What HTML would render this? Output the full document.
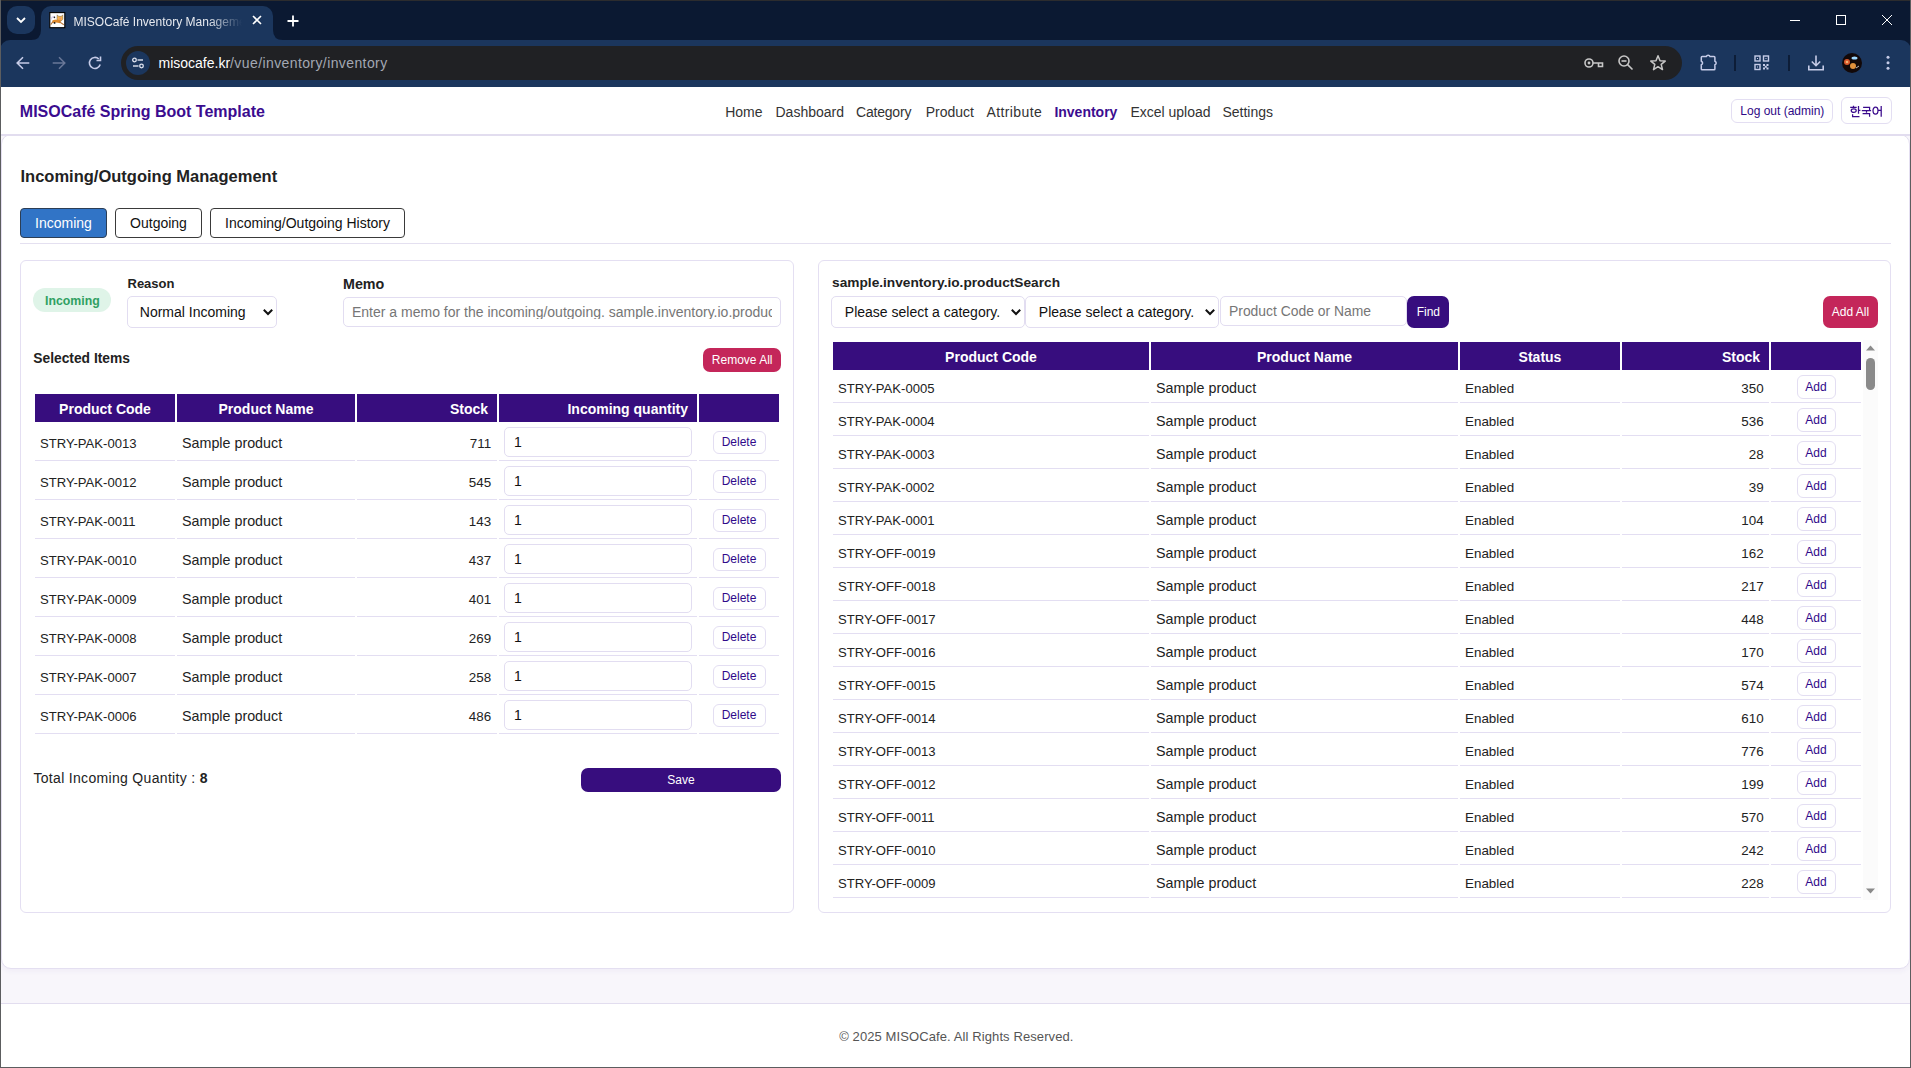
<!DOCTYPE html>
<html><head><meta charset="utf-8">
<style>
*{box-sizing:border-box;margin:0;padding:0}
html,body{width:1911px;height:1068px;overflow:hidden;background:#fff;font-family:"Liberation Sans",sans-serif;position:relative}
.a{position:absolute}
.t{position:absolute;white-space:nowrap;line-height:1}
/* chrome */
#strip{left:0;top:0;width:1911px;height:50px;background:#0b1932}
#tbar{left:0;top:40px;width:1911px;height:47px;background:#1b365d;border-radius:10px 10px 0 0}
#omni{left:121px;top:46px;width:1561px;height:34px;background:#202124;border-radius:17px}
.ic{position:absolute}
/* page */
#nav{left:0;top:87px;width:1911px;height:47px;background:#fff}
#navline{left:0;top:134px;width:1911px;height:2px;background:#e2ddef}
#outer{left:0;top:136px;width:1911px;height:867px;background:#f8f6fb}
#card{left:1px;top:134px;width:1909px;height:835px;background:#fff;border:1px solid #e4dff1;border-radius:10px;box-shadow:0 3px 5px rgba(70,40,140,0.035)}
#foot{left:0;top:1003px;width:1911px;height:65px;background:#fff;border-top:1px solid #e2ddef}
.nv{font-size:14px;color:#333;top:105px}
.btnw{position:absolute;border:1px solid #e3def2;border-radius:6px;background:#fff}
.panel{position:absolute;border:1px solid #e4dff2;border-radius:6px;background:#fff}
.tab{position:absolute;top:208px;height:30px;border:1px solid #3a3a3a;border-radius:4px;background:#fff;font-size:14px;color:#111;text-align:center;line-height:28px}
.inp{position:absolute;border:1px solid #e2ddf1;border-radius:5px;background:#fff}
table.tb{position:absolute;border-collapse:separate;border-spacing:2px;table-layout:fixed}
.tb th{background:#370d7e;color:#fff;font-weight:bold;font-size:14px;height:28px;padding:2px 9px 0;white-space:nowrap}
.tb td{border-bottom:1px solid #e3def2;font-size:13.1px;color:#222;white-space:nowrap;padding:2px 5px 0}
.tbL td{height:37px}
.tbR td{height:31px}
.sb{display:inline-block;border:1px solid #e3def2;border-radius:6px;background:#fff;color:#30098a;font-size:12px;text-align:center}
.tb td.cd{font-size:13.1px}
.tb td.nm{font-size:14.3px}
.tb td.nu{font-size:13.4px}
.tb td.en{font-size:13.4px}
.qi{height:30px;border:1px solid #e2ddf1;border-radius:5px;font-size:14px;color:#111;padding-left:9px;line-height:28px}
.db{width:53px;height:23px;line-height:21px}
.ab{width:39px;height:24px;line-height:22px}
</style></head><body>

<!-- CHROME -->
<div class="a" id="strip"></div>
<div class="a" style="left:0;top:0;width:1911px;height:1px;background:#2c2c2e"></div>
<div class="a" id="tbar"></div>
<!-- tab search -->
<div class="a" style="left:7px;top:6px;width:28px;height:28px;background:#1b365d;border-radius:10px"></div>
<svg class="ic" style="left:15px;top:15px" width="12" height="10" viewBox="0 0 12 10"><path d="M2 3 L6 7 L10 3" fill="none" stroke="#fff" stroke-width="1.8"/></svg>
<!-- active tab -->
<div class="a" style="left:41px;top:6px;width:232px;height:36px;background:#1b365d;border-radius:10px 10px 0 0"></div>
<svg class="ic" style="left:31px;top:30px" width="10" height="10"><path d="M0 10 Q10 10 10 0 L10 10 Z" fill="#1b365d"/></svg>
<svg class="ic" style="left:273px;top:30px" width="10" height="10"><path d="M10 10 Q0 10 0 0 L0 10 Z" fill="#1b365d"/></svg>
<svg class="ic" style="left:46px;top:9px" width="22" height="22" viewBox="0 0 22 22"><rect x="3.8" y="3.6" width="15" height="15.1" fill="#fff" stroke="#000" stroke-width="1.1"/><path d="M5.5 10.5 Q4.8 7.3 8.8 7.6" fill="none" stroke="#d9d3ef" stroke-width="1.3"/><circle cx="8.4" cy="8.4" r="0.8" fill="#222"/><path d="M11.2 5.8 L12.6 7.3 L15.4 7.3 L16.8 5.8 L16.9 10.2 L15.2 12 L12.2 11.8 L11 9.6 Z" fill="#f6b64c" stroke="#6a5a50" stroke-width="0.5"/><circle cx="14.1" cy="9.7" r="0.9" fill="#e98a80"/><path d="M6.3 11.6 Q10.5 9.4 15 11.4 L14.2 14.2 Q9.5 12.9 6.6 14 Z" fill="#e08a2a"/><path d="M7 12.6 L4.6 15.6 M13.2 12.6 L17.8 15.8" stroke="#b8773a" stroke-width="1.1"/><circle cx="8.6" cy="13.9" r="0.9" fill="#111"/></svg>
<div class="t" style="left:73.5px;top:15.5px;font-size:12px;color:#e6e9ef;width:168px;height:16px;overflow:hidden;-webkit-mask-image:linear-gradient(90deg,#000 80%,transparent 100%)">MISOCafé Inventory Management System</div>
<svg class="ic" style="left:251px;top:14px" width="12" height="12" viewBox="0 0 12 12"><path d="M2 2 L10 10 M10 2 L2 10" stroke="#fff" stroke-width="1.6"/></svg>
<svg class="ic" style="left:286px;top:13.5px" width="14" height="14" viewBox="0 0 14 14"><path d="M7 1.5 V12.5 M1.5 7 H12.5" stroke="#fff" stroke-width="1.8"/></svg>
<!-- window controls -->
<div class="a" style="left:1790px;top:20px;width:10px;height:1px;background:#fff"></div>
<div class="a" style="left:1836px;top:15px;width:10px;height:10px;border:1px solid #fff"></div>
<svg class="ic" style="left:1881px;top:14px" width="12" height="12" viewBox="0 0 12 12"><path d="M1 1 L11 11 M11 1 L1 11" stroke="#fff" stroke-width="1"/></svg>
<!-- nav buttons -->
<svg class="ic" style="left:14px;top:55px" width="18" height="16" viewBox="0 0 18 16"><path d="M15.3 8 H3.4 M9 2.2 L3.2 8 L9 13.8" fill="none" stroke="#c6cce8" stroke-width="1.6"/></svg>
<svg class="ic" style="left:51px;top:55px" width="18" height="16" viewBox="0 0 18 16"><path d="M1.7 8 H13.6 M8 2.2 L13.8 8 L8 13.8" fill="none" stroke="#6a7898" stroke-width="1.5"/></svg>
<svg class="ic" style="left:87px;top:55px" width="16" height="16" viewBox="0 0 16 16"><path d="M13.2 9.5 A5.5 5.5 0 1 1 11.8 4" fill="none" stroke="#c6cce8" stroke-width="1.6"/><path d="M13.5 1.5 V5.5 H9.5" fill="none" stroke="#c6cce8" stroke-width="1.6"/></svg>
<div class="a" id="omni"></div>
<div class="a" style="left:126px;top:51px;width:24px;height:24px;border-radius:12px;background:#1b365d"></div>
<svg class="ic" style="left:131px;top:56px" width="14" height="14" viewBox="0 0 14 14"><circle cx="3.5" cy="4" r="1.8" fill="none" stroke="#e0e4f0" stroke-width="1.3"/><path d="M6.5 4 H12" stroke="#e0e4f0" stroke-width="1.4"/><circle cx="10.5" cy="10" r="1.8" fill="none" stroke="#e0e4f0" stroke-width="1.3"/><path d="M2 10 H7.5" stroke="#e0e4f0" stroke-width="1.4"/></svg>
<div class="t" style="left:158.5px;top:56.2px;font-size:14px;color:#fff">misocafe.kr<span style="color:#a3a8b3;letter-spacing:0.4px">/vue/inventory/inventory</span></div>
<!-- omnibox right icons -->
<svg class="ic" style="left:1584px;top:56px" width="20" height="14" viewBox="0 0 20 14"><circle cx="5" cy="7" r="4" fill="none" stroke="#c7c7c7" stroke-width="1.6"/><circle cx="5" cy="7" r="1.4" fill="#c7c7c7"/><path d="M9 7 H18.5 V10.5 H14.5 V7" fill="none" stroke="#c7c7c7" stroke-width="1.6"/></svg>
<svg class="ic" style="left:1617px;top:54px" width="18" height="18" viewBox="0 0 18 18"><circle cx="7" cy="7" r="5" fill="none" stroke="#c7c7c7" stroke-width="1.6"/><path d="M4.5 7 H9.5" stroke="#c7c7c7" stroke-width="1.6"/><path d="M10.6 10.6 L15.5 15.5" stroke="#c7c7c7" stroke-width="1.6"/></svg>
<svg class="ic" style="left:1649px;top:54px" width="18" height="18" viewBox="0 0 18 18"><path d="M9 1.8 L11 6.8 L16.2 7.1 L12.2 10.4 L13.5 15.6 L9 12.7 L4.5 15.6 L5.8 10.4 L1.8 7.1 L7 6.8 Z" fill="none" stroke="#c7c7c7" stroke-width="1.5" stroke-linejoin="round"/></svg>
<!-- toolbar right icons -->
<svg class="ic" style="left:1700px;top:53px" width="18" height="18" viewBox="0 0 18 18"><path d="M2.2 3.6 H6.3 A1.9 1.9 0 0 1 10 3.6 H14 Q14.9 3.6 14.9 4.5 V8.2 A1.9 1.9 0 0 1 14.9 11.8 V15.9 Q14.9 16.8 14 16.8 H2.2 Q1.3 16.8 1.3 15.9 V11.8 A1.9 1.9 0 0 0 1.3 8.2 V4.5 Q1.3 3.6 2.2 3.6 Z" fill="none" stroke="#c6cce8" stroke-width="1.5" stroke-linejoin="round"/></svg>
<div class="a" style="left:1734px;top:55px;width:2px;height:16px;background:#0d1d37"></div>
<svg class="ic" style="left:1754px;top:55px" width="16" height="16" viewBox="0 0 16 16"><rect x="1" y="1" width="5" height="5" fill="none" stroke="#c6cce8" stroke-width="1.4"/><rect x="9.5" y="1" width="5" height="5" fill="none" stroke="#c6cce8" stroke-width="1.4"/><rect x="1" y="9.5" width="5" height="5" fill="none" stroke="#c6cce8" stroke-width="1.4"/><rect x="3" y="3" width="1" height="1" fill="#c6cce8"/><rect x="11.5" y="3" width="1" height="1" fill="#c6cce8"/><rect x="3" y="11.5" width="1" height="1" fill="#c6cce8"/><path d="M9 9 h2 v2 h-2z M12.5 9 h2 v2 h-2z M10.8 10.8 h2 v2 h-2z M9 12.5 h2 v2 h-2z M12.5 12.5 h2 v2 h-2z" fill="#c6cce8"/></svg>
<div class="a" style="left:1788px;top:55px;width:2px;height:16px;background:#0d1d37"></div>
<svg class="ic" style="left:1807px;top:54px" width="18" height="18" viewBox="0 0 18 18"><path d="M9 1.5 V11.5 M4.8 7.5 L9 11.7 L13.2 7.5" fill="none" stroke="#c6cce8" stroke-width="1.6"/><path d="M1.8 11.5 V15.8 H16.2 V11.5" fill="none" stroke="#c6cce8" stroke-width="1.6"/></svg>
<svg class="ic" style="left:1842px;top:53px" width="20" height="20" viewBox="0 0 20 20"><circle cx="10" cy="10" r="10" fill="#120808"/><circle cx="5" cy="9" r="3" fill="#d8562a"/><circle cx="5" cy="9" r="1.3" fill="#f0b070"/><ellipse cx="12.5" cy="5" rx="3" ry="1.6" fill="#9fd8ff"/><circle cx="11" cy="13" r="3" fill="#e0913c"/><path d="M14 15 L17 13" stroke="#bbb" stroke-width="1"/></svg>
<svg class="ic" style="left:1885px;top:55px" width="6" height="16" viewBox="0 0 6 16"><circle cx="3" cy="2.3" r="1.5" fill="#c6cce8"/><circle cx="3" cy="7.8" r="1.5" fill="#c6cce8"/><circle cx="3" cy="13.3" r="1.5" fill="#c6cce8"/></svg>
<!-- PAGE -->
<div class="a" id="nav"></div>
<div class="a" id="outer"></div>
<div class="a" id="card"></div>
<div class="a" id="navline"></div>
<div class="a" id="foot"></div>
<div class="t" style="left:19.8px;top:103.8px;font-size:16px;font-weight:bold;color:#3b0c8f">MISOCafé Spring Boot Template</div>
<div class="t nv" style="left:725.2px">Home</div>
<div class="t nv" style="left:775.5px">Dashboard</div>
<div class="t nv" style="left:856px;letter-spacing:-0.2px">Category</div>
<div class="t nv" style="left:925.7px">Product</div>
<div class="t nv" style="left:986.4px;letter-spacing:0.4px">Attribute</div>
<div class="t nv" style="left:1054.4px;font-weight:bold;color:#3b0c8f">Inventory</div>
<div class="t nv" style="left:1130.4px">Excel upload</div>
<div class="t nv" style="left:1222.4px">Settings</div>
<div class="btnw" style="left:1731px;top:99px;width:102px;height:24px"></div>
<div class="t" style="left:1740.3px;top:104.7px;font-size:12px;color:#2f0a86">Log out (admin)</div>
<div class="btnw" style="left:1841px;top:97px;width:51px;height:27px"></div>
<svg class="ic" style="left:1846px;top:100px" width="40" height="22" viewBox="0 0 40 22"><g fill="none" stroke="#3a0a8c" stroke-width="1.25"><path d="M7.5 5.8 V7.4 M4.2 7.4 H10.7"/><ellipse cx="7.7" cy="10.6" rx="2.5" ry="1.8"/><path d="M12.5 6 V13.8 M12.5 10.4 H14.4"/><path d="M6.6 14.3 V16.6 H13.5"/><path d="M17.1 7.3 H23.6 V10.4 M15.8 10.6 H25.1 M20.5 10.6 V12.8 M16.6 13.7 H23.6 V16.8"/><ellipse cx="29.5" cy="10.6" rx="2.5" ry="3.6"/><path d="M32 10.3 H35.2 M35.2 6 V16.8"/></g></svg>
<div class="t" style="left:20.5px;top:168.3px;font-size:16.5px;font-weight:bold;color:#222">Incoming/Outgoing Management</div>
<div class="tab" style="left:20px;width:87px;background:#3174c6;color:#fff;border-color:#2c3e55">Incoming</div>
<div class="tab" style="left:115px;width:87px">Outgoing</div>
<div class="tab" style="left:210px;width:195px">Incoming/Outgoing History</div>
<div class="a" style="left:20px;top:243px;width:1871px;height:1px;background:#e4e0f0"></div>
<div class="panel" style="left:20px;top:260px;width:774px;height:653px"></div>
<div class="panel" style="left:818px;top:260px;width:1073px;height:653px"></div>
<!-- LEFT PANEL -->
<div class="a" style="left:33px;top:288px;width:78px;height:24px;border-radius:12px;background:#dff4e8"></div>
<div class="t" style="left:45px;top:294.9px;font-size:12.3px;font-weight:bold;color:#30a062">Incoming</div>
<div class="t" style="left:127.5px;top:277px;font-size:13px;font-weight:bold;color:#222">Reason</div>
<div class="inp" style="left:127px;top:296px;width:150px;height:32px"></div>
<div class="t" style="left:139.8px;top:304.9px;font-size:14px;color:#111">Normal Incoming</div>
<div class="a" style="left:262px;top:308px;line-height:0"><svg width="12" height="8" viewBox="0 0 12 8"><path d="M1.8 1.8 L6 6 L10.2 1.8" fill="none" stroke="#111" stroke-width="2"/></svg></div>
<div class="t" style="left:343px;top:277px;font-size:14.3px;font-weight:bold;color:#222">Memo</div>
<div class="inp" style="left:343px;top:297px;width:438px;height:30px"></div>
<div class="t" style="left:352px;top:305.1px;font-size:14px;color:#767676;width:420px;overflow:hidden">Enter a memo for the incoming/outgoing. sample.inventory.io.productMemo</div>
<div class="t" style="left:33.3px;top:352px;font-size:13.8px;font-weight:bold;color:#222">Selected Items</div>
<div class="a" style="left:703px;top:348px;width:78px;height:24px;border-radius:7px;background:#c4265a"></div>
<div class="t" style="left:711.8px;top:353.8px;font-size:12px;color:#fff">Remove All</div>
<table class="tb tbL" style="left:33px;top:392px;width:748px">
<colgroup><col style="width:140px"><col style="width:178px"><col style="width:140px"><col style="width:198px"><col style="width:80px"></colgroup>
<tr><th style="text-align:center">Product Code</th><th style="text-align:center">Product Name</th><th style="text-align:right">Stock</th><th style="text-align:right">Incoming quantity</th><th></th></tr>
<tr><td class="cd">STRY-PAK-0013</td><td class="nm">Sample product</td><td class="nu" style="text-align:right;padding-right:5.8px">711</td><td style="padding:0 5px"><div class="qi">1</div></td><td style="text-align:center;padding:0"><span class="sb db">Delete</span></td></tr>
<tr><td class="cd">STRY-PAK-0012</td><td class="nm">Sample product</td><td class="nu" style="text-align:right;padding-right:5.8px">545</td><td style="padding:0 5px"><div class="qi">1</div></td><td style="text-align:center;padding:0"><span class="sb db">Delete</span></td></tr>
<tr><td class="cd">STRY-PAK-0011</td><td class="nm">Sample product</td><td class="nu" style="text-align:right;padding-right:5.8px">143</td><td style="padding:0 5px"><div class="qi">1</div></td><td style="text-align:center;padding:0"><span class="sb db">Delete</span></td></tr>
<tr><td class="cd">STRY-PAK-0010</td><td class="nm">Sample product</td><td class="nu" style="text-align:right;padding-right:5.8px">437</td><td style="padding:0 5px"><div class="qi">1</div></td><td style="text-align:center;padding:0"><span class="sb db">Delete</span></td></tr>
<tr><td class="cd">STRY-PAK-0009</td><td class="nm">Sample product</td><td class="nu" style="text-align:right;padding-right:5.8px">401</td><td style="padding:0 5px"><div class="qi">1</div></td><td style="text-align:center;padding:0"><span class="sb db">Delete</span></td></tr>
<tr><td class="cd">STRY-PAK-0008</td><td class="nm">Sample product</td><td class="nu" style="text-align:right;padding-right:5.8px">269</td><td style="padding:0 5px"><div class="qi">1</div></td><td style="text-align:center;padding:0"><span class="sb db">Delete</span></td></tr>
<tr><td class="cd">STRY-PAK-0007</td><td class="nm">Sample product</td><td class="nu" style="text-align:right;padding-right:5.8px">258</td><td style="padding:0 5px"><div class="qi">1</div></td><td style="text-align:center;padding:0"><span class="sb db">Delete</span></td></tr>
<tr><td class="cd">STRY-PAK-0006</td><td class="nm">Sample product</td><td class="nu" style="text-align:right;padding-right:5.8px">486</td><td style="padding:0 5px"><div class="qi">1</div></td><td style="text-align:center;padding:0"><span class="sb db">Delete</span></td></tr>
</table>
<div class="t" style="left:33.4px;top:771.1px;font-size:14px;color:#222;letter-spacing:0.32px">Total Incoming Quantity : <b style="letter-spacing:0">8</b></div>
<div class="a" style="left:581px;top:768px;width:200px;height:24px;border-radius:7px;background:#370d7e"></div>
<div class="t" style="left:581px;width:200px;text-align:center;top:773.7px;font-size:12px;color:#fff">Save</div>
<!-- RIGHT PANEL -->
<div class="t" style="left:832.1px;top:275.8px;font-size:13.7px;font-weight:bold;color:#222">sample.inventory.io.productSearch</div>
<div class="inp" style="left:831px;top:296px;width:194px;height:32px"></div>
<div class="t" style="left:844.8px;top:304.9px;font-size:14px;color:#111">Please select a category.</div>
<div class="a" style="left:1010px;top:308px;line-height:0"><svg width="12" height="8" viewBox="0 0 12 8"><path d="M1.8 1.8 L6 6 L10.2 1.8" fill="none" stroke="#111" stroke-width="2"/></svg></div>
<div class="inp" style="left:1025px;top:296px;width:194px;height:32px"></div>
<div class="t" style="left:1038.8px;top:304.9px;font-size:14px;color:#111">Please select a category.</div>
<div class="a" style="left:1204px;top:308px;line-height:0"><svg width="12" height="8" viewBox="0 0 12 8"><path d="M1.8 1.8 L6 6 L10.2 1.8" fill="none" stroke="#111" stroke-width="2"/></svg></div>
<div class="inp" style="left:1220px;top:296px;width:187px;height:30px"></div>
<div class="t" style="left:1229px;top:304.8px;font-size:13.9px;color:#767676">Product Code or Name</div>
<div class="a" style="left:1407px;top:296px;width:42px;height:32px;border-radius:7px;background:#370d7e"></div>
<div class="t" style="left:1416.7px;top:306.2px;font-size:12px;color:#fff">Find</div>
<div class="a" style="left:1823px;top:296px;width:55px;height:32px;border-radius:7px;background:#c4265a"></div>
<div class="t" style="left:1831.8px;top:306.2px;font-size:12px;color:#fff">Add All</div>
<div class="a" style="left:831px;top:340px;width:1047px;height:560px;overflow:hidden">
<table class="tb tbR" style="left:0;top:0;width:1032px">
<colgroup><col style="width:316px"><col style="width:307px"><col style="width:160px"><col style="width:147px"><col style="width:90px"></colgroup>
<tr><th style="text-align:center">Product Code</th><th style="text-align:center">Product Name</th><th style="text-align:center">Status</th><th style="text-align:right">Stock</th><th></th></tr>
<tr><td class="cd">STRY-PAK-0005</td><td class="nm">Sample product</td><td class="en">Enabled</td><td class="nu" style="text-align:right;padding-right:5.4px">350</td><td style="text-align:center;padding:0"><span class="sb ab">Add</span></td></tr>
<tr><td class="cd">STRY-PAK-0004</td><td class="nm">Sample product</td><td class="en">Enabled</td><td class="nu" style="text-align:right;padding-right:5.4px">536</td><td style="text-align:center;padding:0"><span class="sb ab">Add</span></td></tr>
<tr><td class="cd">STRY-PAK-0003</td><td class="nm">Sample product</td><td class="en">Enabled</td><td class="nu" style="text-align:right;padding-right:5.4px">28</td><td style="text-align:center;padding:0"><span class="sb ab">Add</span></td></tr>
<tr><td class="cd">STRY-PAK-0002</td><td class="nm">Sample product</td><td class="en">Enabled</td><td class="nu" style="text-align:right;padding-right:5.4px">39</td><td style="text-align:center;padding:0"><span class="sb ab">Add</span></td></tr>
<tr><td class="cd">STRY-PAK-0001</td><td class="nm">Sample product</td><td class="en">Enabled</td><td class="nu" style="text-align:right;padding-right:5.4px">104</td><td style="text-align:center;padding:0"><span class="sb ab">Add</span></td></tr>
<tr><td class="cd">STRY-OFF-0019</td><td class="nm">Sample product</td><td class="en">Enabled</td><td class="nu" style="text-align:right;padding-right:5.4px">162</td><td style="text-align:center;padding:0"><span class="sb ab">Add</span></td></tr>
<tr><td class="cd">STRY-OFF-0018</td><td class="nm">Sample product</td><td class="en">Enabled</td><td class="nu" style="text-align:right;padding-right:5.4px">217</td><td style="text-align:center;padding:0"><span class="sb ab">Add</span></td></tr>
<tr><td class="cd">STRY-OFF-0017</td><td class="nm">Sample product</td><td class="en">Enabled</td><td class="nu" style="text-align:right;padding-right:5.4px">448</td><td style="text-align:center;padding:0"><span class="sb ab">Add</span></td></tr>
<tr><td class="cd">STRY-OFF-0016</td><td class="nm">Sample product</td><td class="en">Enabled</td><td class="nu" style="text-align:right;padding-right:5.4px">170</td><td style="text-align:center;padding:0"><span class="sb ab">Add</span></td></tr>
<tr><td class="cd">STRY-OFF-0015</td><td class="nm">Sample product</td><td class="en">Enabled</td><td class="nu" style="text-align:right;padding-right:5.4px">574</td><td style="text-align:center;padding:0"><span class="sb ab">Add</span></td></tr>
<tr><td class="cd">STRY-OFF-0014</td><td class="nm">Sample product</td><td class="en">Enabled</td><td class="nu" style="text-align:right;padding-right:5.4px">610</td><td style="text-align:center;padding:0"><span class="sb ab">Add</span></td></tr>
<tr><td class="cd">STRY-OFF-0013</td><td class="nm">Sample product</td><td class="en">Enabled</td><td class="nu" style="text-align:right;padding-right:5.4px">776</td><td style="text-align:center;padding:0"><span class="sb ab">Add</span></td></tr>
<tr><td class="cd">STRY-OFF-0012</td><td class="nm">Sample product</td><td class="en">Enabled</td><td class="nu" style="text-align:right;padding-right:5.4px">199</td><td style="text-align:center;padding:0"><span class="sb ab">Add</span></td></tr>
<tr><td class="cd">STRY-OFF-0011</td><td class="nm">Sample product</td><td class="en">Enabled</td><td class="nu" style="text-align:right;padding-right:5.4px">570</td><td style="text-align:center;padding:0"><span class="sb ab">Add</span></td></tr>
<tr><td class="cd">STRY-OFF-0010</td><td class="nm">Sample product</td><td class="en">Enabled</td><td class="nu" style="text-align:right;padding-right:5.4px">242</td><td style="text-align:center;padding:0"><span class="sb ab">Add</span></td></tr>
<tr><td class="cd">STRY-OFF-0009</td><td class="nm">Sample product</td><td class="en">Enabled</td><td class="nu" style="text-align:right;padding-right:5.4px">228</td><td style="text-align:center;padding:0"><span class="sb ab">Add</span></td></tr>
</table>
<div class="a" style="left:1032px;top:0;width:15px;height:560px;background:#fbfbfb"></div>
<svg class="ic" style="left:1035px;top:5px" width="9" height="6" viewBox="0 0 9 6"><path d="M0 5.5 L4.5 0.5 L9 5.5 Z" fill="#8a8a8a"/></svg>
<div class="a" style="left:1035px;top:18px;width:9px;height:32px;border-radius:4.5px;background:#8a8a8a"></div>
<svg class="ic" style="left:1035px;top:548px" width="9" height="6" viewBox="0 0 9 6"><path d="M0 0.5 L4.5 5.5 L9 0.5 Z" fill="#8a8a8a"/></svg>
</div>
<div class="t" style="left:839.2px;top:1029.9px;font-size:13px;color:#555;letter-spacing:0.1px">© 2025 MISOCafe. All Rights Reserved.</div>
<div class="a" style="left:0;top:0;width:1px;height:1068px;background:#5c5d5f"></div>
<div class="a" style="left:1910px;top:0;width:1px;height:1068px;background:#5c5d5f"></div>
<div class="a" style="left:0;top:1067px;width:1911px;height:1px;background:#5c5d5f"></div>
</body></html>
